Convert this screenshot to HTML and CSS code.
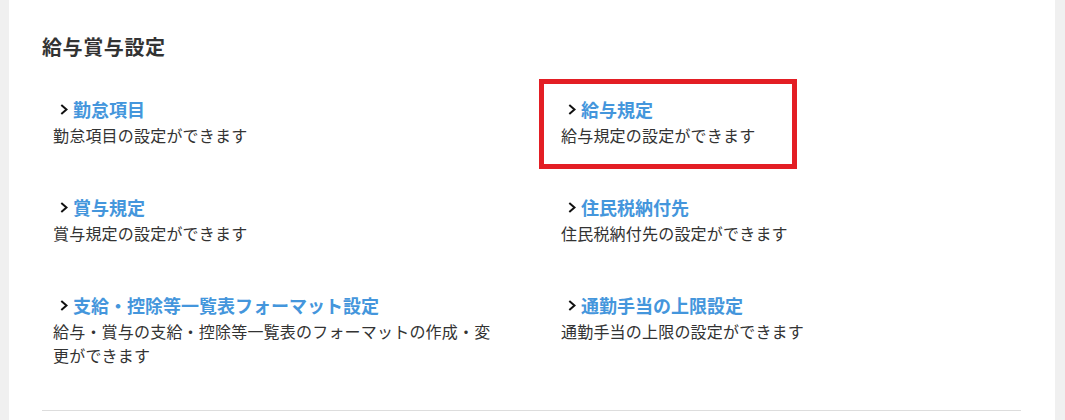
FILE: index.html
```html
<!DOCTYPE html>
<html>
<head>
    <title>給与賞与設定</title>
    <meta charset="utf-8">
    <link rel="stylesheet" href="styles.css">
</head>
<body>
    <div class="panel">
        <h2 class="section-title">給与賞与設定</h2>

        <div class="menu-grid">
            <div class="menu-item">
                <a class="menu-link" href="#"><svg class="chevron" viewBox="0 0 8 11"><path d="M1.3 1 L6.5 5.5 L1.3 10"/></svg>勤怠項目</a>
                <p class="menu-desc">勤怠項目の設定ができます</p>
            </div>
            <div class="menu-item highlighted">
                <a class="menu-link" href="#"><svg class="chevron" viewBox="0 0 8 11"><path d="M1.3 1 L6.5 5.5 L1.3 10"/></svg>給与規定</a>
                <p class="menu-desc">給与規定の設定ができます</p>
            </div>
            <div class="menu-item">
                <a class="menu-link" href="#"><svg class="chevron" viewBox="0 0 8 11"><path d="M1.3 1 L6.5 5.5 L1.3 10"/></svg>賞与規定</a>
                <p class="menu-desc">賞与規定の設定ができます</p>
            </div>
            <div class="menu-item">
                <a class="menu-link" href="#"><svg class="chevron" viewBox="0 0 8 11"><path d="M1.3 1 L6.5 5.5 L1.3 10"/></svg>住民税納付先</a>
                <p class="menu-desc">住民税納付先の設定ができます</p>
            </div>
            <div class="menu-item">
                <a class="menu-link" href="#"><svg class="chevron" viewBox="0 0 8 11"><path d="M1.3 1 L6.5 5.5 L1.3 10"/></svg>支給・控除等一覧表フォーマット設定</a>
                <p class="menu-desc">給与・賞与の支給・控除等一覧表のフォーマットの作成・変更ができます</p>
            </div>
            <div class="menu-item">
                <a class="menu-link" href="#"><svg class="chevron" viewBox="0 0 8 11"><path d="M1.3 1 L6.5 5.5 L1.3 10"/></svg>通勤手当の上限設定</a>
                <p class="menu-desc">通勤手当の上限の設定ができます</p>
            </div>
        </div>

        <hr class="divider">
    </div>
</body>
</html>
```

FILE: styles.css
```css
body {
    margin: 0;
    background-color: #f0f0f0;
    font-family: "Noto Sans CJK JP", "Noto Sans", sans-serif;
    color: #333;
}
.panel {
    margin-left: 9px;
    width: 1046px;
    box-sizing: border-box;
    min-height: 420px;
    background-color: #fff;
    padding: 33px 34px 0 33px;
}
.section-title {
    margin: 0;
    font-size: 20px;
    line-height: 28px;
    letter-spacing: 0.6px;
    font-weight: bold;
    color: #333;
}
.menu-grid {
    display: grid;
    grid-template-columns: 440px 440px;
    column-gap: 68px;
    row-gap: 46px;
    margin-top: 34px;
    padding-left: 11px;
}
.menu-item {
    position: relative;
}
.menu-link {
    display: flex;
    align-items: center;
    padding-left: 7px;
    font-size: 18px;
    line-height: 28px;
    font-weight: bold;
    color: #4496dc;
    text-decoration: none;
}
.chevron {
    width: 8px;
    height: 11px;
    margin-right: 5px;
    fill: none;
    stroke: #111;
    stroke-width: 2;
}
.menu-desc {
    margin: 0;
    font-size: 16px;
    line-height: 24px;
    letter-spacing: 0.2px;
    color: #333;
}
.highlighted::after {
    content: "";
    position: absolute;
    top: -16px;
    left: -22px;
    width: 258px;
    height: 90px;
    box-sizing: border-box;
    border: 5px solid #e31e24;
}
.divider {
    margin: 43px 0 0 0;
    border: none;
    border-top: 1px solid #ddd;
}
```
